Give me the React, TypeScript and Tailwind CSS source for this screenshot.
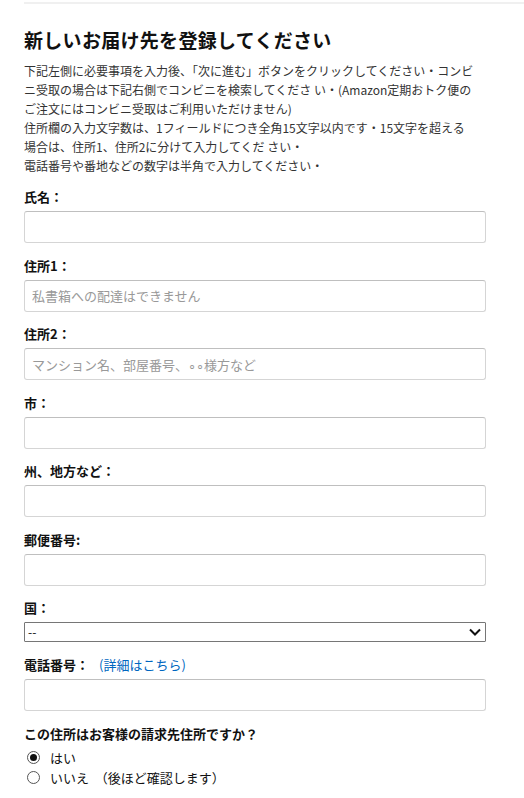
import React from "react";

const font = {
  fontFamily: '"Noto Sans CJK JP", "Liberation Sans", sans-serif',
};

function Field({
  label,
  placeholder,
  extra,
}: {
  label: string;
  placeholder?: string;
  extra?: React.ReactNode;
}) {
  return (
    <div className="mb-[13.5px]">
      <div className="mb-[5px] h-[18px] text-[13px] leading-[18px] font-bold text-[#111]">
        {label}
        {extra}
      </div>
      <input
        type="text"
        placeholder={placeholder}
        className="block h-8 w-full rounded-[3px] border border-[#d5d5d5] border-t-[#bfbfbf] bg-white px-[7px] text-[13px] text-[#111] outline-none placeholder:text-[#999]"
      />
    </div>
  );
}

export default function App() {
  const [billing, setBilling] = React.useState("yes");

  return (
    <div className="min-h-screen bg-white" style={font}>
      <div className="ml-6 mt-[2px] h-[2px] bg-[#f0f0f0]" />

      <div className="ml-6 w-[462px]">
        <h1 className="mt-[23px] whitespace-nowrap text-[19px] leading-[26px] font-bold tracking-[0.3px] text-[#111]">
          新しいお届け先を登録してください
        </h1>

        <div className="mt-[8px] whitespace-nowrap text-[12px] leading-[19px] text-[#333]">
          <div>下記左側に必要事項を入力後、「次に進む」ボタンをクリックしてください・コンビ</div>
          <div>ニ受取の場合は下記右側でコンビニを検索してくださ い・(Amazon定期おトク便の</div>
          <div>ご注文にはコンビニ受取はご利用いただけません)</div>
          <div>住所欄の入力文字数は、1フィールドにつき全角15文字以内です・15文字を超える</div>
          <div>場合は、住所1、住所2に分けて入力してくだ さい・</div>
          <div>電話番号や番地などの数字は半角で入力してください・</div>
        </div>

        <form className="mt-[13px]" onSubmit={(e) => e.preventDefault()}>
          <Field label="氏名：" />
          <Field label="住所1：" placeholder="私書箱への配達はできません" />
          <Field label="住所2：" placeholder="マンション名、部屋番号、∘∘様方など" />
          <Field label="市：" />
          <Field label="州、地方など：" />
          <Field label="郵便番号:" />

          <div className="mb-[14px]">
            <div className="mb-[5px] h-[18px] text-[13px] leading-[18px] font-bold text-[#111]">
              国：
            </div>
            <div className="relative">
              <select className="block h-5 w-full appearance-none rounded-[1px] border border-[#767676] bg-white pl-[3px] text-[12px] leading-[18px] text-[#111] outline-none">
                <option>--</option>
              </select>
              <svg
                className="pointer-events-none absolute right-[5px] top-[6px]"
                width="12"
                height="8"
                viewBox="0 0 12 8"
                fill="none"
              >
                <path d="M1 1.5 6 6.5 11 1.5" stroke="#111" strokeWidth="2" />
              </svg>
            </div>
          </div>

          <Field
            label="電話番号："
            extra={
              <a href="#" className="ml-[10px] font-normal text-[#0066c0]">
                (詳細はこちら)
              </a>
            }
          />

          <div className="h-[18px] text-[13px] leading-[18px] font-bold text-[#111]">
            この住所はお客様の請求先住所ですか？
          </div>
          <div className="mt-[5px] text-[13px] text-[#111]">
            {[
              { v: "yes", t: "はい" },
              { v: "no", t: "いいえ  （後ほど確認します）" },
            ].map((o) => (
              <label
                key={o.v}
                className="flex h-5 items-center whitespace-pre"
                onClick={() => setBilling(o.v)}
              >
                <span className="ml-[3px] flex h-[13px] w-[13px] items-center justify-center rounded-full border border-[#555] bg-white">
                  {billing === o.v && (
                    <span className="h-[7px] w-[7px] rounded-full bg-[#111]" />
                  )}
                </span>
                <span className="ml-[10px]">{o.t}</span>
              </label>
            ))}
          </div>
        </form>
      </div>
    </div>
  );
}
